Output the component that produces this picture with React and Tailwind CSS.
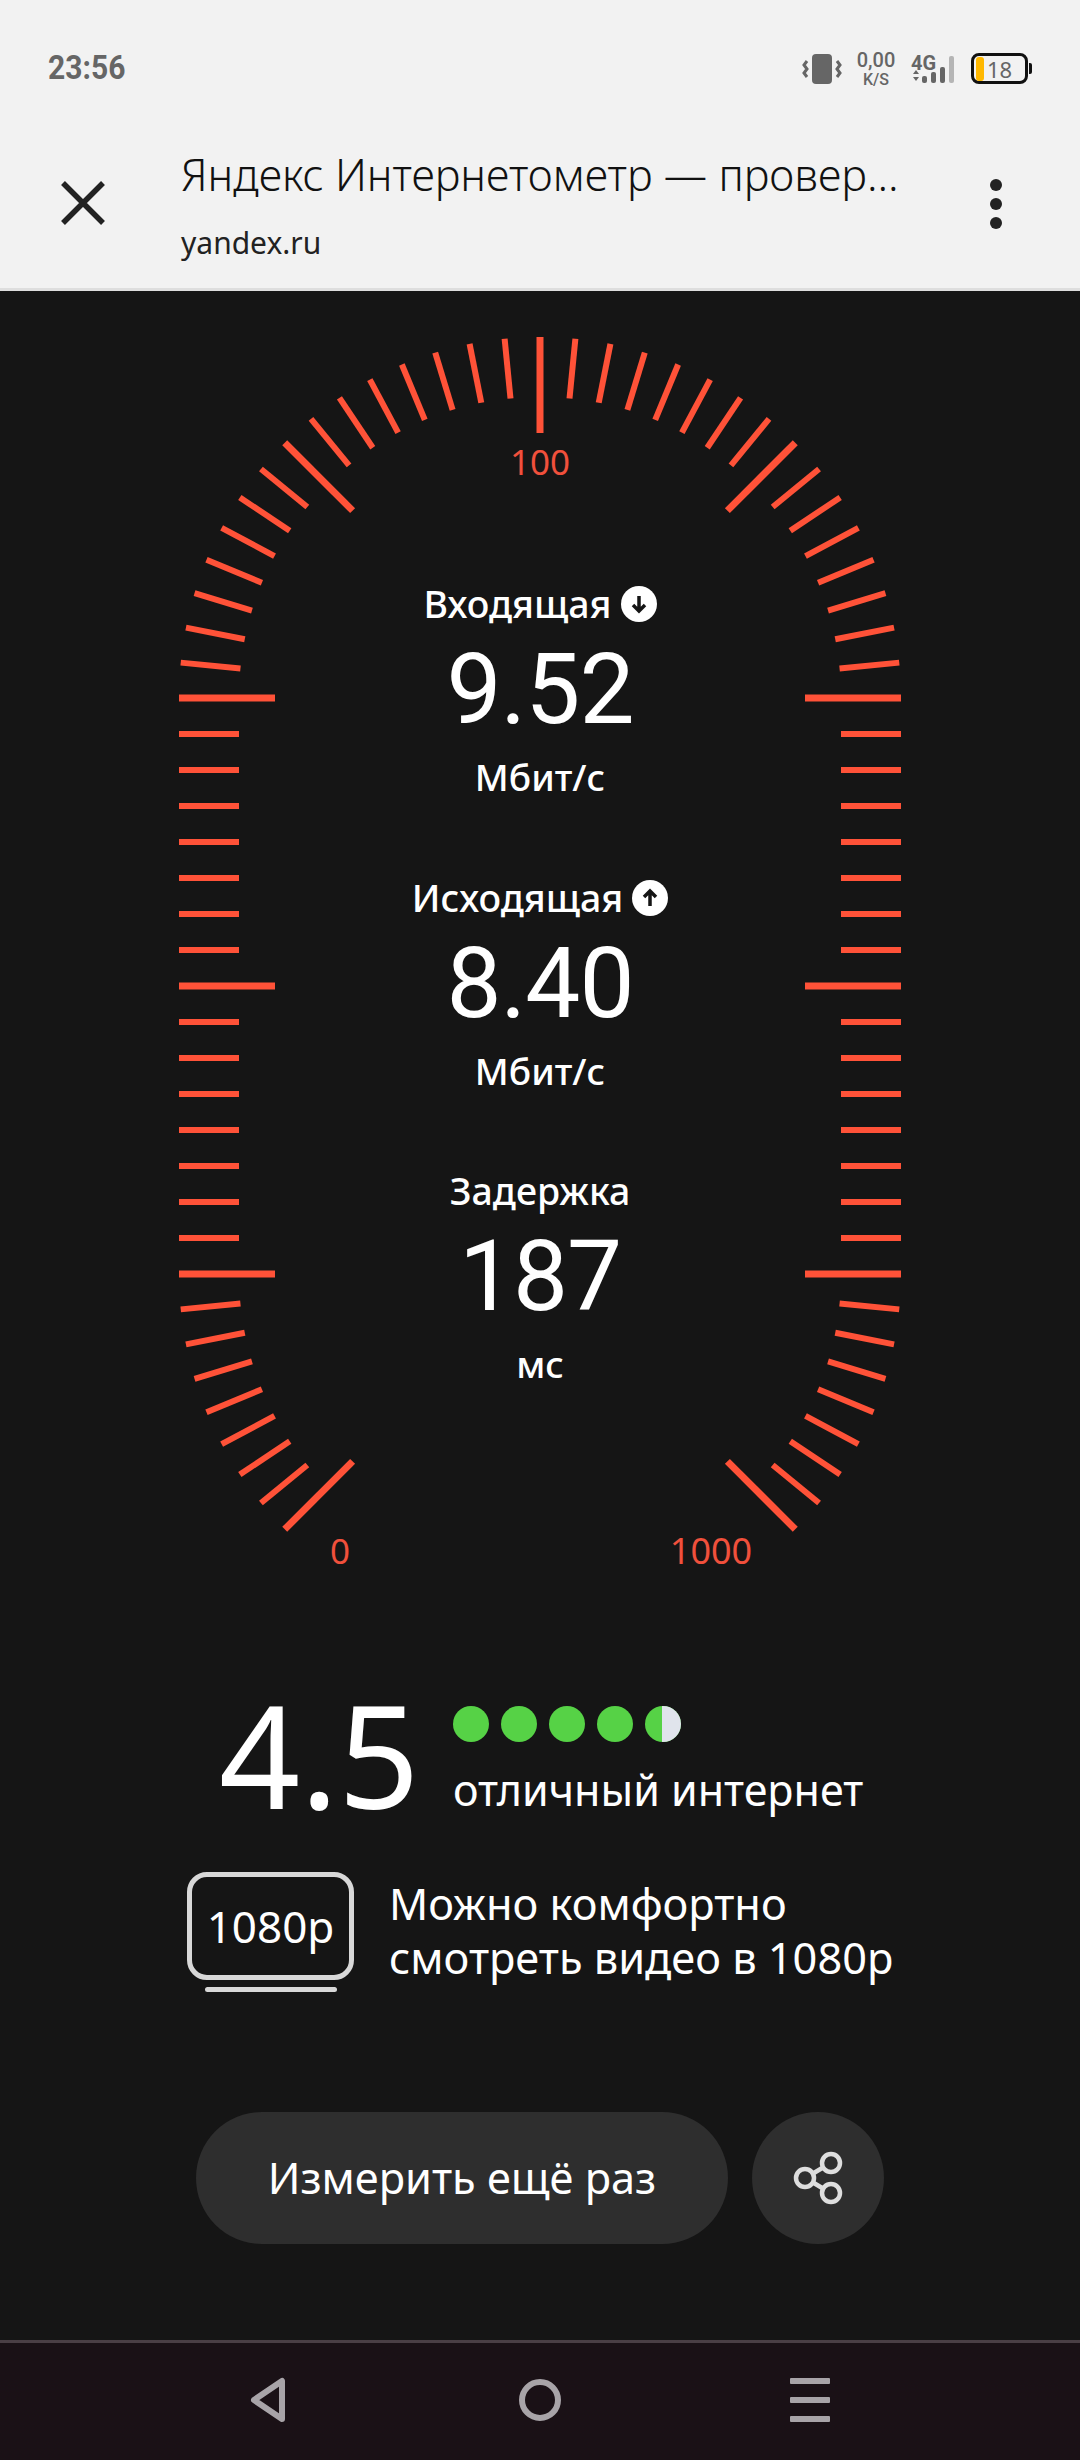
const RED = "#ff5238";

function Gauge() {
  const ticks = [];
  const cx = 540;
  const top = 407;
  const bottom = 983;
  const polar = (cy, r, a) => [cx + r * Math.cos(a), cy + r * Math.sin(a)];
  const add = (cy, a, long) => {
    const [x1, y1] = polar(cy, 361, a);
    const [x2, y2] = polar(cy, long ? 265 : 301, a);
    ticks.push(<line key={ticks.length} x1={x1} y1={y1} x2={x2} y2={y2} stroke={RED} strokeWidth={long ? 7 : 6} />);
  };
  for (let i = 0; i <= 32; i++) add(top, Math.PI + (i * Math.PI) / 32, i % 8 === 0);
  for (let k = 1; k < 16; k++) {
    const y = top + 36 * k;
    const long = k === 8;
    ticks.push(<line key={ticks.length} x1={179} y1={y} x2={long ? 275 : 239} y2={y} stroke={RED} strokeWidth={long ? 7 : 6} />);
    ticks.push(<line key={ticks.length} x1={901} y1={y} x2={long ? 805 : 841} y2={y} stroke={RED} strokeWidth={long ? 7 : 6} />);
  }
  for (let i = 0; i <= 8; i++) {
    add(bottom, Math.PI - (i * Math.PI) / 32, i % 8 === 0);
    add(bottom, (i * Math.PI) / 32, i % 8 === 0);
  }
  return (
    <svg className="col-start-1 row-start-1 block" width="1080" height="1403" viewBox="0 0 1080 1403">
      {ticks}
      <text x="540" y="184" textAnchor="middle" fill="#f0503c" fontSize="35" fontFamily="'Noto Sans', sans-serif">100</text>
      <text x="340" y="1273" textAnchor="middle" fill="#f0503c" fontSize="35" fontFamily="'Noto Sans', sans-serif">0</text>
      <text x="711" y="1273" textAnchor="middle" fill="#f0503c" fontSize="36" fontFamily="'Noto Sans', sans-serif">1000</text>
    </svg>
  );
}

function ArrowDisc({ up }) {
  return (
    <svg width="36" height="36" viewBox="0 0 36 36" className="ml-[9px]">
      <circle cx="18" cy="18" r="18" fill="#fff" />
      <path
        d={up ? "M18 26V11M12 17l6-6 6 6" : "M18 10v15M12 19l6 6 6-6"}
        fill="none"
        stroke="#151515"
        strokeWidth="3.5"
      />
    </svg>
  );
}

function Metric({ label, value, unit, dir }) {
  return (
    <div className="flex h-[293.5px] flex-col items-center text-white">
      <div className="flex h-[44px] items-center text-[37.5px] font-medium leading-[44px]">
        <span>{label}</span>
        {dir && <ArrowDisc up={dir === "up"} />}
      </div>
      <div className="mt-[14px] h-[100px] text-[98px] leading-[100px] tracking-[-1px] font-['Roboto',sans-serif]">{value}</div>
      <div className="mt-[15px] h-[44px] text-[37px] font-medium leading-[44px]">{unit}</div>
    </div>
  );
}

function StatusIcons() {
  return (
    <div className="flex items-center">
      <svg width="42" height="34" viewBox="0 0 42 34">
        <rect x="11" y="2" width="20" height="30" rx="4" fill="#666" />
        <path d="M6 9l-3 4 3 4-3 4 3 4M36 9l3 4-3 4 3 4-3 4" fill="none" stroke="#666" strokeWidth="3" />
      </svg>
      <div className="ml-[12px] flex w-[42px] flex-col items-center font-medium text-[#666] font-['Roboto',sans-serif]">
        <span className="text-[20px] leading-[20px]">0,00</span>
        <span className="mt-[2px] text-[16px] leading-[15px]">K/S</span>
      </div>
      <div className="relative ml-[14px] h-[34px] w-[48px]">
        <span className="text-[20px] font-bold leading-[20px] text-[#666] font-['Roboto',sans-serif]">4G</span>
        <svg className="absolute left-0 top-0" width="46" height="34" viewBox="0 0 46 34">
          <path d="M2 22l3-4 3 4zM2 25h6l-3 4z" fill="#666" />
          <rect x="11" y="24" width="5" height="7" rx="2" fill="#666" />
          <rect x="20" y="20" width="5" height="11" rx="2" fill="#666" />
          <rect x="29" y="15" width="5" height="16" rx="2" fill="#666" />
          <rect x="38" y="4" width="5" height="27" rx="2" fill="#b5b5b5" />
        </svg>
      </div>
      <div className="ml-[12px] flex items-center">
        <div className="flex h-[31px] w-[57px] items-center rounded-[8px] border-[3px] border-[#111] pl-[2px]">
          <div className="h-[24px] w-[8px] rounded-[3px] bg-[#ffb800]" />
          <span className="ml-[3px] text-[22px] leading-[24px] text-[#666]">18</span>
        </div>
        <div className="ml-[1px] h-[11px] w-[3px] rounded-r-[2px] bg-[#111]" />
      </div>
    </div>
  );
}

function Dot({ half }) {
  return (
    <div className="h-[36px] w-[36px] overflow-hidden rounded-full bg-[#56d246]">
      {half && <div className="ml-[17px] h-full w-[19px] bg-[#e0e4ec]" />}
    </div>
  );
}

export default function App() {
  return (
    <div className="flex h-[2460px] w-[1080px] flex-col bg-[#151515] font-['Noto_Sans',sans-serif]">
      <header className="h-[291px] shrink-0 border-b-[3px] border-[#dedede] bg-[#f2f2f2]">
        <div className="flex h-[134px] items-start justify-between pl-[48px] pr-[48px] pt-[50px]">
          <span className="mt-[1px] origin-left scale-x-[0.91] text-[33px] font-bold leading-[34px] text-[#666] font-['Roboto',sans-serif]">23:56</span>
          <StatusIcons />
        </div>
        <div className="flex h-[154px] items-start">
          <svg className="ml-[60px] mt-[46px]" width="46" height="46" viewBox="0 0 46 46">
            <path d="M3 3l40 40M43 3L3 43" fill="none" stroke="#222" strokeWidth="5.5" />
          </svg>
          <div className="ml-[75px] w-[760px] text-[#222]">
            <div className="mt-[13px] whitespace-nowrap text-[43.3px] font-light leading-[56px] text-[#111]">Яндекс Интернетометр — провер...</div>
            <div className="mt-[20px] text-[30px] leading-[40px]">yandex.ru</div>
          </div>
          <svg className="ml-[48px] mt-[44px]" width="14" height="52" viewBox="0 0 14 52">
            <circle cx="7" cy="7" r="6" fill="#222" />
            <circle cx="7" cy="26" r="6" fill="#222" />
            <circle cx="7" cy="45" r="6" fill="#222" />
          </svg>
        </div>
      </header>

      <main className="h-[2049px] shrink-0">
        <div className="grid">
          <Gauge />
          <div className="col-start-1 row-start-1 pt-[291px]">
            <Metric label="Входящая" value="9.52" unit="Мбит/с" dir="down" />
            <Metric label="Исходящая" value="8.40" unit="Мбит/с" dir="up" />
            <Metric label="Задержка" value="187" unit="мс" />
          </div>
        </div>

        <div className="ml-[219px] flex text-white">
          <div className="w-[234px] text-[142px] leading-[120px]">4.5</div>
          <div className="flex flex-col">
            <div className="mt-[12px] flex gap-[12px]">
              <Dot /><Dot /><Dot /><Dot /><Dot half />
            </div>
            <div className="mt-[20px] whitespace-nowrap text-[43px] leading-[56px]">отличный интернет</div>
          </div>
        </div>

        <div className="ml-[187px] mt-[54px] flex text-white">
          <div className="flex flex-col items-center">
            <div className="flex h-[108px] w-[167px] items-center justify-center rounded-[20px] border-[5px] border-[#d8d8d8] text-[44px]">1080p</div>
            <div className="mt-[7px] h-[5px] w-[132px] rounded-full bg-[#d8d8d8]" />
          </div>
          <div className="ml-[35px] mt-[5px] whitespace-nowrap text-[43.3px] leading-[54px]">
            <div>Можно комфортно</div>
            <div>смотреть видео в 1080p</div>
          </div>
        </div>

        <div className="ml-[196px] mt-[120px] flex gap-[24px]">
          <button className="flex h-[132px] w-[532px] items-center justify-center rounded-full bg-[#2e2e2e] text-[43.3px] text-white">Измерить ещё раз</button>
          <button className="flex h-[132px] w-[132px] items-center justify-center rounded-full bg-[#2e2e2e]">
            <svg width="60" height="60" viewBox="0 0 60 60" fill="none" stroke="#dedede" strokeWidth="4.5">
              <circle cx="43" cy="15" r="9" />
              <circle cx="17" cy="30" r="9" />
              <circle cx="43" cy="45" r="9" />
              <path d="M25 25.5l10-6M25 34.5l10 6" />
            </svg>
          </button>
        </div>
      </main>

      <nav className="flex h-[120px] shrink-0 items-start border-t-[3px] border-[#4a3f45] bg-[#1a1116]">
        <svg className="ml-[248px] mt-[33px]" width="40" height="48" viewBox="0 0 40 48" fill="none" stroke="#a8a4a8" strokeWidth="6" strokeLinejoin="round">
          <path d="M6 24L34 5v38z" />
        </svg>
        <svg className="ml-[231px] mt-[35px]" width="42" height="44" viewBox="0 0 42 44" fill="none" stroke="#a8a4a8" strokeWidth="6">
          <circle cx="21" cy="22" r="18" />
        </svg>
        <div className="ml-[229px] mt-[35px] flex h-[44px] w-[40px] flex-col justify-between">
          <div className="h-[6px] rounded-[1px] bg-[#a8a4a8]" />
          <div className="h-[6px] rounded-[1px] bg-[#a8a4a8]" />
          <div className="h-[6px] rounded-[1px] bg-[#a8a4a8]" />
        </div>
      </nav>
    </div>
  );
}
